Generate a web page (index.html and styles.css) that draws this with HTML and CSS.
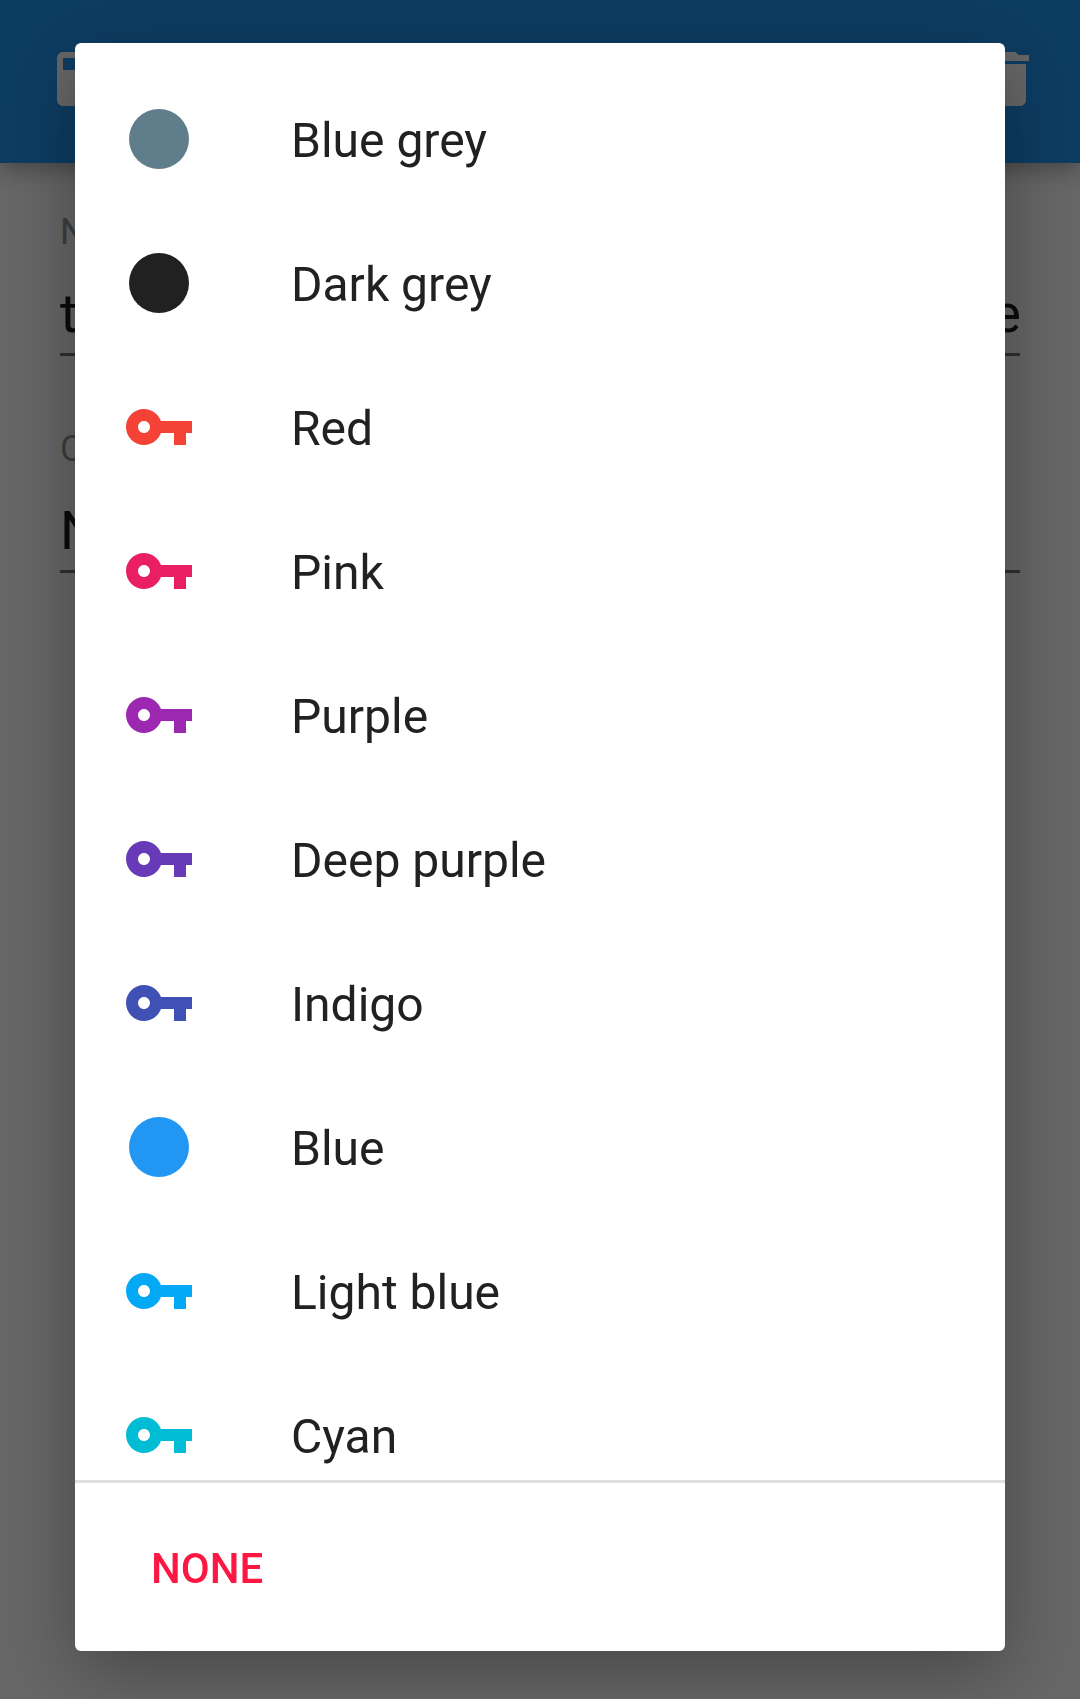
FILE: index.html
```html
<!DOCTYPE html>
<html lang="en">
<head>
<meta charset="utf-8">
<title>Choose color</title>
<link rel="stylesheet" href="styles.css">
</head>
<body>
<svg width="0" height="0" class="defs">
  <symbol id="key" viewBox="0 0 24 24"><path d="M12.65 10C11.83 7.67 9.61 6 7 6c-3.31 0-6 2.69-6 6s2.69 6 6 6c2.61 0 4.83-1.67 5.65-4H17v4h4v-4h2v-4H12.65zM7 14c-1.1 0-2-.9-2-2s.9-2 2-2 2 .9 2 2-.9 2-2 2z"/></symbol>
  <symbol id="dot" viewBox="0 0 24 24"><circle cx="12" cy="12" r="10"/></symbol>
</svg>
<div class="page">
  <header class="bar">
    <svg class="bar-icon" viewBox="0 0 24 24"><path fill-rule="evenodd" d="M5 3h14c1.1 0 2 .9 2 2v14c0 1.1-.9 2-2 2H5c-1.1 0-2-.9-2-2V5c0-1.1.9-2 2-2zM5 5v4h14V5z"/></svg>
    <svg class="bar-icon" viewBox="0 0 24 24"><path d="M6 19c0 1.1.9 2 2 2h8c1.1 0 2-.9 2-2V7H6v12zM19 4h-3.5l-1-1h-5l-1 1H5v2h14V4z"/></svg>
  </header>
  <main class="form">
    <div class="field">
      <div class="label">N</div>
      <div class="value"><span>t</span><span class="end">e</span></div>
    </div>
    <div class="field">
      <div class="label">C</div>
      <div class="value"><span>N</span></div>
    </div>
  </main>
</div>
<div class="scrim">
  <section class="dialog">
    <ul class="list">
      <li class="row"><svg class="icon blue-grey"><use href="#dot"/></svg><span>Blue grey</span></li>
      <li class="row"><svg class="icon dark-grey"><use href="#dot"/></svg><span>Dark grey</span></li>
      <li class="row"><svg class="icon red"><use href="#key"/></svg><span>Red</span></li>
      <li class="row"><svg class="icon pink"><use href="#key"/></svg><span>Pink</span></li>
      <li class="row"><svg class="icon purple"><use href="#key"/></svg><span>Purple</span></li>
      <li class="row"><svg class="icon deep-purple"><use href="#key"/></svg><span>Deep purple</span></li>
      <li class="row"><svg class="icon indigo"><use href="#key"/></svg><span>Indigo</span></li>
      <li class="row"><svg class="icon blue"><use href="#dot"/></svg><span>Blue</span></li>
      <li class="row"><svg class="icon light-blue"><use href="#key"/></svg><span>Light blue</span></li>
      <li class="row"><svg class="icon cyan"><use href="#key"/></svg><span>Cyan</span></li>
    </ul>
    <footer class="actions"><button class="button">NONE</button></footer>
  </section>
</div>
</body>
</html>
```
FILE: styles.css
```css
* { box-sizing: border-box; }
body {
  margin: 0;
  height: 1699px;
  overflow: hidden;
  font-family: Roboto, sans-serif;
}
.defs { position: absolute; }
.page { height: 1699px; background: #fff; }
.bar {
  display: flex;
  justify-content: space-between;
  height: 163px;
  padding: 43px 36px 0 48px;
  background: #2196f3;
  box-shadow: 0 8px 20px rgba(0, 0, 0, .28);
}
.bar-icon { width: 72px; height: 72px; fill: #fff; }
.form { padding: 48px 60px 0; }
.field { height: 217px; }
.label {
  height: 42px;
  font-size: 36px;
  line-height: 42px;
  color: #999;
}
.value {
  display: flex;
  justify-content: space-between;
  height: 103px;
  padding-top: 29px;
  border-bottom: 3px solid #757575;
  font-size: 54px;
  line-height: 63px;
  color: #1c1c1c;
}
.end { margin-right: -1px; }
.scrim {
  position: fixed;
  inset: 0;
  padding: 43px 75px 48px;
  background: rgba(0, 0, 0, .6);
}
.dialog {
  display: flex;
  flex-direction: column;
  height: 1608px;
  border-radius: 6px;
  background: #fff;
  box-shadow: 0 20px 76px rgba(0, 0, 0, .32);
}
.list {
  flex: none;
  height: 1437px;
  margin: 0;
  padding: 24px 48px 0;
  overflow: hidden;
  list-style: none;
}
.row {
  display: flex;
  align-items: center;
  gap: 96px;
  height: 144px;
  font-size: 48px;
  line-height: 56px;
  color: #212121;
}
.row span { padding-top: 3px; }
.icon { flex: none; width: 72px; height: 72px; }
.blue-grey { fill: #607d8b; }
.dark-grey { fill: #212121; }
.red { fill: #f44336; }
.pink { fill: #e91e63; }
.purple { fill: #9c27b0; }
.deep-purple { fill: #673ab7; }
.indigo { fill: #3f51b5; }
.blue { fill: #2196f3; }
.light-blue { fill: #03a9f4; }
.cyan { fill: #00bcd4; }
.actions {
  flex: 1;
  display: flex;
  align-items: center;
  padding: 3px 76px 0;
  border-top: 3px solid #e0e0e0;
}
.button {
  padding: 0;
  border: 0;
  background: none;
  font: 500 42px/50px Roboto, sans-serif;
  color: #ff1744;
}
```
